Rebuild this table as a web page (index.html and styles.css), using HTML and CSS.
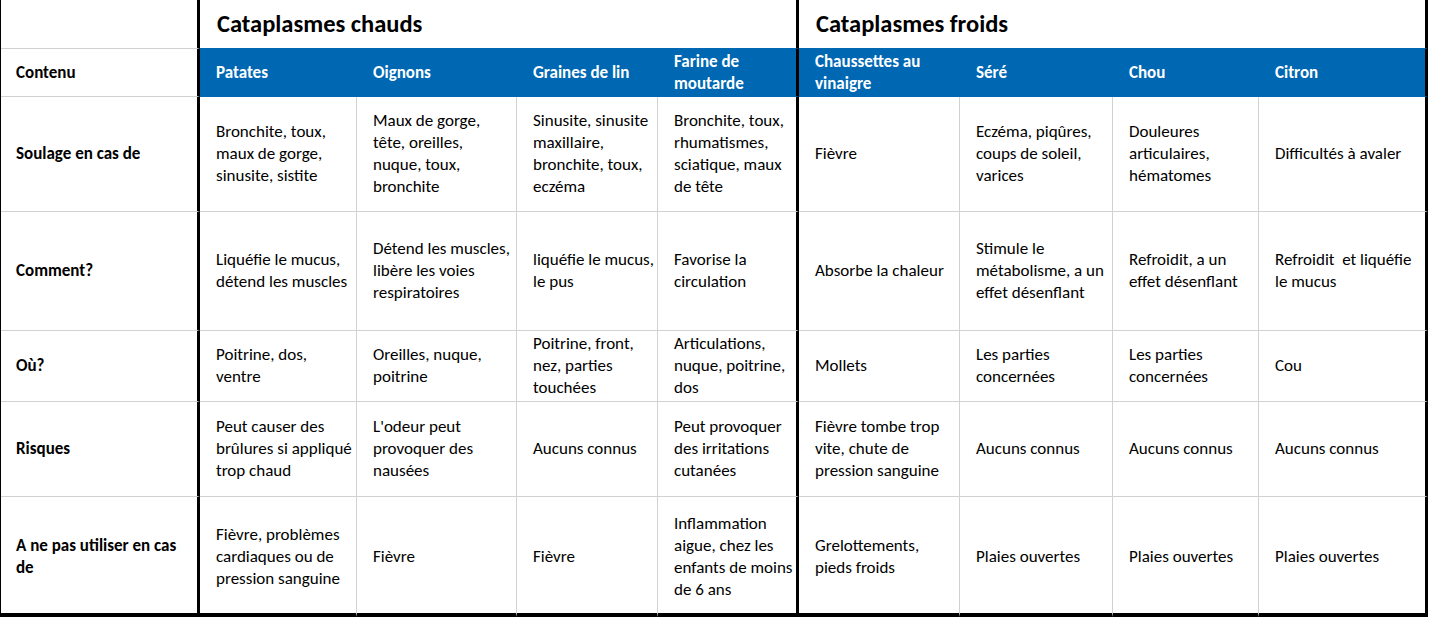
FILE: index.html
```html
<!DOCTYPE html>
<html lang="fr">
<head>
<meta charset="utf-8">
<title>Cataplasmes</title>
<link rel="stylesheet" href="styles.css">
</head>
<body>
<div class="sheet">
  <div class="cell thick"></div>
  <div class="cell title span4 thick">Cataplasmes chauds</div>
  <div class="cell title span4 thick">Cataplasmes froids</div>

  <div class="cell label thick">Contenu</div>
  <div class="cell head">Patates</div>
  <div class="cell head">Oignons</div>
  <div class="cell head">Graines de lin</div>
  <div class="cell head thick">Farine de<br>moutarde</div>
  <div class="cell head">Chaussettes au<br>vinaigre</div>
  <div class="cell head">Séré</div>
  <div class="cell head">Chou</div>
  <div class="cell head thick">Citron</div>

  <div class="cell label thick">Soulage en cas de</div>
  <div class="cell">Bronchite, toux,<br>maux de gorge,<br>sinusite, sistite</div>
  <div class="cell">Maux de gorge,<br>tête, oreilles,<br>nuque, toux,<br>bronchite</div>
  <div class="cell">Sinusite, sinusite<br>maxillaire,<br>bronchite, toux,<br>eczéma</div>
  <div class="cell thick">Bronchite, toux,<br>rhumatismes,<br>sciatique, maux<br>de tête</div>
  <div class="cell">Fièvre</div>
  <div class="cell">Eczéma, piqûres,<br>coups de soleil,<br>varices</div>
  <div class="cell">Douleures<br>articulaires,<br>hématomes</div>
  <div class="cell thick">Difficultés à avaler</div>

  <div class="cell label thick">Comment?</div>
  <div class="cell">Liquéfie le mucus,<br>détend les muscles</div>
  <div class="cell">Détend les muscles,<br>libère les voies<br>respiratoires</div>
  <div class="cell">liquéfie le mucus,<br>le pus</div>
  <div class="cell thick">Favorise la<br>circulation</div>
  <div class="cell">Absorbe la chaleur</div>
  <div class="cell">Stimule le<br>métabolisme, a un<br>effet désenflant</div>
  <div class="cell">Refroidit, a un<br>effet désenflant</div>
  <div class="cell thick">Refroidit&nbsp; et liquéfie<br>le mucus</div>

  <div class="cell label thick">Où?</div>
  <div class="cell">Poitrine, dos,<br>ventre</div>
  <div class="cell">Oreilles, nuque,<br>poitrine</div>
  <div class="cell">Poitrine, front,<br>nez, parties<br>touchées</div>
  <div class="cell thick">Articulations,<br>nuque, poitrine,<br>dos</div>
  <div class="cell">Mollets</div>
  <div class="cell">Les parties<br>concernées</div>
  <div class="cell">Les parties<br>concernées</div>
  <div class="cell thick">Cou</div>

  <div class="cell label thick">Risques</div>
  <div class="cell">Peut causer des<br>brûlures si appliqué<br>trop chaud</div>
  <div class="cell">L'odeur peut<br>provoquer des<br>nausées</div>
  <div class="cell">Aucuns connus</div>
  <div class="cell thick">Peut provoquer<br>des irritations<br>cutanées</div>
  <div class="cell">Fièvre tombe trop<br>vite, chute de<br>pression sanguine</div>
  <div class="cell">Aucuns connus</div>
  <div class="cell">Aucuns connus</div>
  <div class="cell thick">Aucuns connus</div>

  <div class="cell label thick last">A ne pas utiliser en cas<br>de</div>
  <div class="cell last">Fièvre, problèmes<br>cardiaques ou de<br>pression sanguine</div>
  <div class="cell last">Fièvre</div>
  <div class="cell last">Fièvre</div>
  <div class="cell thick last">Inflammation<br>aigue, chez les<br>enfants de moins<br>de 6 ans</div>
  <div class="cell last">Grelottements,<br>pieds froids</div>
  <div class="cell last">Plaies ouvertes</div>
  <div class="cell last">Plaies ouvertes</div>
  <div class="cell thick last">Plaies ouvertes</div>
</div>
</body>
</html>
```

FILE: styles.css
```css
* { box-sizing: border-box; }

html, body {
  margin: 0;
  padding: 0;
  background: #fff;
}

body {
  font-family: Carlito, Calibri, Lato, "Liberation Sans", sans-serif;
  font-size: 17px;
  line-height: 22px;
  color: #000;
}

.sheet {
  display: grid;
  width: 1428px;
  grid-template-columns: 199px 157px 160px 141px 141px 161px 153px 146px 169px;
  grid-template-rows: 49px 48px 115px 119px 71px 95px 120px;
  border-left: 1px solid #000;
}

.cell {
  display: flex;
  align-items: center;
  padding: 0 4px 0 16px;
  white-space: nowrap;
  border-right: 1px solid #d2d2d2;
  border-bottom: 1px solid #d2d2d2;
}

.thick {
  border-right: 3px solid #000;
}

.label {
  font-weight: bold;
  padding-left: 15px;
}

.span4 {
  grid-column: span 4;
}

.title {
  font-weight: bold;
  font-size: 24.5px;
  padding-left: 17px;
  border-bottom-color: #0067b3;
}

.head {
  background: #0067b3;
  color: #fff;
  font-weight: bold;
  border-bottom-color: #0067b3;
  border-right-color: #0067b3;
}

.head.thick {
  border-right-color: #000;
}

.last {
  padding-top: 3px;
  border-bottom: 4px solid #000;
}
```
